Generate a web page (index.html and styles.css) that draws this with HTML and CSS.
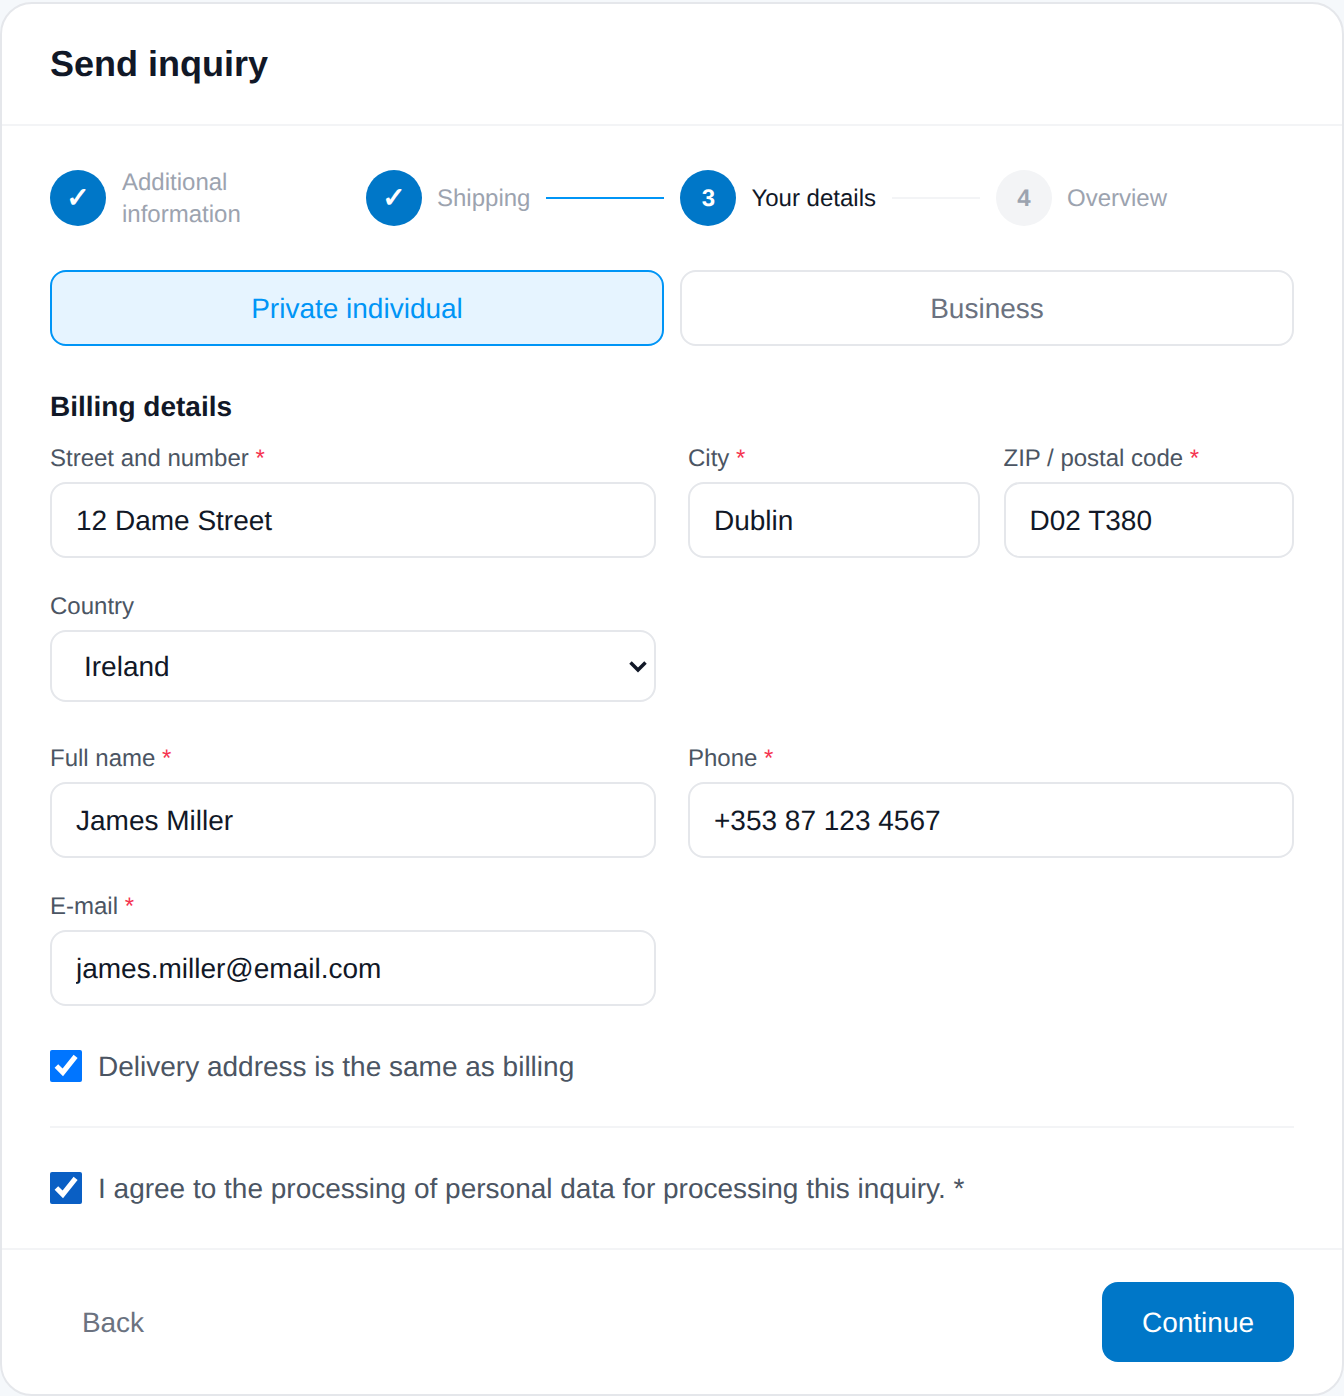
FILE: index.html
```html
<!DOCTYPE html>
<html lang="en">
<head>
<meta charset="utf-8">
<title>Send inquiry</title>
<link rel="stylesheet" href="styles.css">
</head>
<body>
<main class="card">
  <header class="card-head"><h1>Send inquiry</h1></header>
  <form class="card-body">
    <ol class="steps">
      <li class="step step-first"><span class="dot dot-on tick">✓</span><span class="step-label muted">Additional information</span></li>
      <li class="step"><span class="dot dot-on tick">✓</span><span class="step-label muted">Shipping</span></li>
      <li class="line line-done"></li>
      <li class="step"><span class="dot dot-on num">3</span><span class="step-label current">Your details</span></li>
      <li class="line line-todo"></li>
      <li class="step"><span class="dot dot-off num">4</span><span class="step-label muted">Overview</span></li>
    </ol>
    <div class="tabs">
      <button type="button" class="tab tab-on">Private individual</button>
      <button type="button" class="tab">Business</button>
    </div>
    <h2>Billing details</h2>
    <div class="row row-tight">
      <label class="field"><span class="lbl">Street and number <i>*</i></span><input class="inp" value="12 Dame Street"></label>
      <div class="pair">
        <label class="field"><span class="lbl">City <i>*</i></span><input class="inp" value="Dublin"></label>
        <label class="field"><span class="lbl">ZIP / postal code <i>*</i></span><input class="inp" value="D02 T380"></label>
      </div>
    </div>
    <div class="row row-country">
      <label class="field"><span class="lbl">Country</span>
        <span class="sel-wrap">
          <select class="inp sel"><option>Ireland</option></select>
          <svg class="chev" width="20" height="14" viewBox="0 0 20 14" aria-hidden="true"><polyline points="2.5,2.5 10,10 17.5,2.5" fill="none" stroke="#111827" stroke-width="3.5"/></svg>
        </span>
      </label>
    </div>
    <div class="row row-name">
      <label class="field"><span class="lbl">Full name <i>*</i></span><input class="inp" value="James Miller"></label>
      <label class="field"><span class="lbl">Phone <i>*</i></span><input class="inp" value="+353 87 123 4567"></label>
    </div>
    <div class="row row-mail">
      <label class="field"><span class="lbl">E-mail <i>*</i></span><input class="inp" value="james.miller@email.com"></label>
    </div>
    <label class="check check-same"><input type="checkbox" checked><span>Delivery address is the same as billing</span></label>
    <hr class="rule">
    <label class="check check-agree"><input type="checkbox" checked><span>I agree to the processing of personal data for processing this inquiry. *</span></label>
  </form>
  <footer class="card-foot">
    <button type="button" class="back">Back</button>
    <button type="button" class="next">Continue</button>
  </footer>
</main>
</body>
</html>
```
FILE: styles.css
```css
* { box-sizing: border-box; text-rendering: geometricPrecision; }
html, body { margin: 0; padding: 0; }
body {
  background: #f5f8fb;
  padding-top: 2px;
  font-family: "Liberation Sans", Arial, sans-serif;
  color: #111827;
}
.card {
  width: 1344px;
  height: 1394px;
  background: #fff;
  border: 2px solid #e5e7eb;
  border-radius: 32px;
  display: flex;
  flex-direction: column;
}
.card-head {
  height: 122px;
  padding: 40px 48px 0;
  border-bottom: 2px solid #f3f4f6;
}
h1 { margin: 0; font-size: 36px; line-height: 40px; font-weight: 700; color: #111827; }
.card-body { flex: 1; padding: 44px 48px 0; display: flex; flex-direction: column; }
.steps { list-style: none; margin: 0; padding: 0; height: 56px; display: flex; align-items: center; gap: 16px; }
.step { display: flex; align-items: center; gap: 15px; font-size: 24px; line-height: 32px; }
.step-first { width: 300px; gap: 16px; }
.dot {
  flex: none; width: 56px; height: 56px; border-radius: 50%; padding-top: 2px;
  display: flex; align-items: center; justify-content: center;
  font-size: 24px; color: #fff;
}
.dot-on { background: #0077c8; }
.dot-off { background: #f3f4f6; color: #9ca3af; }
.num { font-weight: 700; }
.tick { font-size: 28px; font-weight: 700; padding-top: 0; }
.step-label { padding-top: 2px; }
.step-label.muted { color: #9ca3af; }
.step-label.current { color: #111827; }
.line { height: 2px; }
.line-done { width: 118px; background: #0095f6; }
.line-todo { width: 88px; background: #f3f4f6; }
.tabs { display: grid; grid-template-columns: 1fr 1fr; gap: 16px; margin-top: 44px; }
.tab {
  height: 76px; padding-top: 2px; border-radius: 16px; border: 2px solid #e5e7eb; background: #fff;
  font: 28px "Liberation Sans", Arial, sans-serif; color: #6b7280;
}
.tab-on { background: #e6f4ff; border-color: #0095f6; color: #0095f6; }
h2 { margin: 44px 0 0; font-size: 28px; line-height: 34px; font-weight: 700; color: #111827; }
.row { display: grid; grid-template-columns: 606px 606px; gap: 32px; }
.row-tight { margin-top: 18px; }
.row-country { margin-top: 32px; }
.row-name { margin-top: 40px; }
.row-mail { margin-top: 32px; }
.pair { display: grid; grid-template-columns: 291.5px 290.5px; gap: 24px; }
.field { display: flex; flex-direction: column; gap: 6px; }
.lbl { font-size: 24px; line-height: 34px; color: #4b5563; white-space: nowrap; }
.lbl i { font-style: normal; color: #f5334f; }
.inp {
  width: 100%; height: 76px; padding: 2px 24px 0; border: 2px solid #e5e7eb; border-radius: 16px;
  background: #fff; color: #111827; font: 28px "Liberation Sans", Arial, sans-serif; outline: none;
}
.sel-wrap { position: relative; display: block; }
.sel { display: block; height: 72px; padding: 0 48px 0 32px; appearance: none; -webkit-appearance: none; }
.chev { position: absolute; right: 8px; top: 30px; pointer-events: none; }
.check { display: flex; align-items: flex-start; gap: 16px; font-size: 28px; line-height: 32px; color: #4b5563; }
.check span { padding-top: 1px; }
.check input { width: 32px; height: 32px; margin: 0; flex: none; }
.check-same { margin-top: 44px; }
.check-same input { accent-color: #0075ff; }
.check-agree input { accent-color: #0a5fc4; }
.rule { width: 100%; margin: 43px 0 44px; border: 0; border-top: 2px solid #f3f4f6; }
.card-foot {
  height: 146px; padding: 32px 48px 0; border-top: 2px solid #f3f4f6;
  display: flex; justify-content: space-between; align-items: flex-start;
}
.back, .next { height: 80px; padding-top: 2px; border: 0; border-radius: 16px; font: 28px "Liberation Sans", Arial, sans-serif; }
.back { width: 126px; background: transparent; color: #6b7280; }
.next { width: 192px; background: #0077c8; color: #fff; }
```
